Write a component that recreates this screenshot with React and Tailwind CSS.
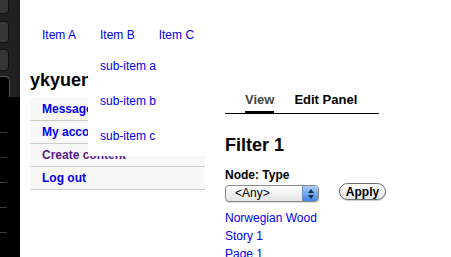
export default function App() {
  const rows = [
    { label: "Messages", visited: false },
    { label: "My account", visited: false },
    { label: "Create content", visited: true },
    { label: "Log out", visited: false },
  ];
  const links = ["Norwegian Wood", "Story 1", "Page 1"];

  return (
    <div
      className="flex h-[257px] w-[451px] overflow-hidden bg-white text-[12px] leading-[14px] text-black"
      style={{ fontFamily: '"Liberation Sans", Arial, sans-serif' }}
    >
      {/* dark side strip */}
      <div className="flex h-full w-[20px] shrink-0 flex-col bg-[#202020]">
        <div className="h-[16px] w-[9px] rounded-br-[4px] border-b border-r border-[#111] bg-[#353535]" />
        <div className="mt-[7px] h-[24px] w-[9px] rounded-r-[4px] border border-l-0 border-[#111] bg-[#353535]" />
        <div className="mt-[6px] h-[24px] w-[9px] rounded-r-[4px] border border-l-0 border-[#111] bg-[#353535]" />
        <div className="mt-[5px] flex h-[24px]">
          <div className="h-full w-[10px] rounded-tr-[5px] border-r border-t border-[#555] bg-black" />
        </div>
        <div className="flex flex-1 flex-col bg-black pt-[35px]">
          {[0, 1, 2, 3, 4].map((i) => (
            <div key={i} className="mb-[24px] h-px w-[7px] bg-[#3a3a3a]" />
          ))}
        </div>
      </div>

      {/* main */}
      <div className="flex-1 pl-[10px]">
        <ul className="flex h-[69px] items-start pt-[28px]">
          <li className="px-[12px] text-[#0000ee]">Item A</li>
          <li className="relative px-[12px] text-[#0000ee]">
            Item B
            <ul className="absolute left-0 top-[14px] z-10 h-[114px] w-[117px] bg-white pt-[7px]">
              {["sub-item a", "sub-item b", "sub-item c"].map((s) => (
                <li key={s} className="px-[12px] leading-[35px] text-[#0000ee]">
                  {s}
                </li>
              ))}
            </ul>
          </li>
          <li className="px-[12px] text-[#0000ee]">Item C</li>
        </ul>

        <div className="flex">
          <div className="w-[175px] shrink-0">
            <h2 className="text-[18px] font-bold leading-[22px]">ykyuen</h2>
            <ul className="mt-[7px] bg-[#f8f8f8]">
              {rows.map((r) => (
                <li
                  key={r.label}
                  className={`h-[23px] border-b border-[#cccccc] pl-[12px] font-bold leading-[22px] ${
                    r.visited ? "text-[#551a8b]" : "text-[#0000ee]"
                  }`}
                >
                  {r.label}
                </li>
              ))}
            </ul>
          </div>

          <div className="ml-[20px] w-[154px] shrink-0 pt-[23px]">
            <ul className="flex gap-[20px] border-b border-black pl-[20px] text-[13px] font-bold leading-[15px]">
              <li className="-mb-px border-b-[3px] border-black pb-[4px] text-[#444]">View</li>
              <li className="pb-[6px]">Edit Panel</li>
            </ul>

            <h2 className="mt-[20px] text-[18px] font-bold leading-[22px]">Filter 1</h2>

            <div className="mt-[12px] font-bold">Node: Type</div>
            <div className="mt-[1px] flex items-start">
              <div className="mt-[2px] flex h-[17px] w-[94px] shrink-0 items-stretch overflow-hidden rounded-[4px] border border-[#8a8a8a] bg-gradient-to-b from-white to-[#e4e4e4] shadow-[0_1px_1px_rgba(0,0,0,0.15)]">
                <span className="flex-1 pl-[9px] text-[12px] leading-[15px]">&lt;Any&gt;</span>
                <span className="flex w-[16px] flex-col items-center justify-center gap-[2px] border-l border-[#6b8fc4] bg-gradient-to-b from-[#a9cdf7] to-[#3d86e8]">
                  <svg width="6" height="4" viewBox="0 0 6 4">
                    <path d="M3 0 L6 4 L0 4 Z" fill="#1c2a44" />
                  </svg>
                  <svg width="6" height="4" viewBox="0 0 6 4">
                    <path d="M0 0 L6 0 L3 4 Z" fill="#1c2a44" />
                  </svg>
                </span>
              </div>
              <button className="ml-[20px] h-[17px] w-[47px] shrink-0 rounded-full border border-[#6a6a6a] bg-gradient-to-b from-white to-[#e6e6e6] text-[12px] font-bold leading-[14px] shadow-[0_1px_1px_rgba(0,0,0,0.2)]">
                Apply
              </button>
            </div>

            <ul className="mt-[7px] whitespace-nowrap">
              {links.map((l) => (
                <li key={l} className="leading-[18px] text-[#0000ee]">
                  {l}
                </li>
              ))}
            </ul>
          </div>
        </div>
      </div>
    </div>
  );
}
